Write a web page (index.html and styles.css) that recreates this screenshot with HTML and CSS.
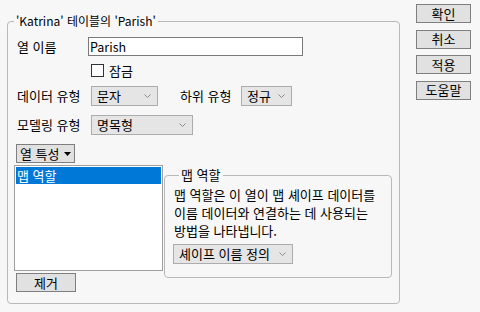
FILE: index.html
```html
<!DOCTYPE html>
<html lang="ko">
<head>
<meta charset="utf-8">
<link rel="stylesheet" href="styles.css">
</head>
<body>
<div class="dialog">
  <fieldset class="group main">
    <legend class="latin">'Katrina' 테이블의 'Parish'</legend>
    <div class="form">
      <div class="row row-name">
        <span class="label label-name">열 이름</span>
        <div class="textbox latin">Parish</div>
      </div>
      <div class="row row-lock">
        <span class="checkbox"></span>
        <span class="check-label">잠금</span>
      </div>
      <div class="row row-type">
        <span class="label label-wide">데이터 유형</span>
        <div class="dropdown dd-data"><span>문자</span><svg class="chev" width="7" height="4" viewBox="0 0 7 4"><polyline points="0.5,0.5 3.5,3.5 6.5,0.5" fill="none" stroke="#8a8a8a" stroke-width="1"/></svg></div>
        <span class="label label-sub">하위 유형</span>
        <div class="dropdown dd-sub"><span>정규</span><svg class="chev" width="7" height="4" viewBox="0 0 7 4"><polyline points="0.5,0.5 3.5,3.5 6.5,0.5" fill="none" stroke="#8a8a8a" stroke-width="1"/></svg></div>
      </div>
      <div class="row row-model">
        <span class="label label-wide">모델링 유형</span>
        <div class="dropdown dd-model"><span>명목형</span><svg class="chev" width="7" height="4" viewBox="0 0 7 4"><polyline points="0.5,0.5 3.5,3.5 6.5,0.5" fill="none" stroke="#8a8a8a" stroke-width="1"/></svg></div>
      </div>
      <div class="btn btn-menu"><span>열 특성</span><svg class="tri" width="7" height="4" viewBox="0 0 7 4"><polygon points="0,0 7,0 3.5,4" fill="#000"/></svg></div>
      <div class="bottom">
        <div class="left-col">
          <div class="listbox">
            <div class="list-item selected">맵 역할</div>
          </div>
          <div class="btn btn-remove">제거</div>
        </div>
        <fieldset class="group inner">
          <legend>맵 역할</legend>
          <p class="desc">맵 역할은 이 열이 맵 셰이프 데이터를<br>이름 데이터와 연결하는 데 사용되는<br>방법을 나타냅니다.</p>
          <div class="dropdown dd-shape"><span>셰이프 이름 정의</span><svg class="chev" width="7" height="4" viewBox="0 0 7 4"><polyline points="0.5,0.5 3.5,3.5 6.5,0.5" fill="none" stroke="#8a8a8a" stroke-width="1"/></svg></div>
        </fieldset>
      </div>
    </div>
  </fieldset>
  <div class="actions">
    <div class="btn btn-action">확인</div>
    <div class="btn btn-action">취소</div>
    <div class="btn btn-action">적용</div>
    <div class="btn btn-action">도움말</div>
  </div>
</div>
</body>
</html>
```
FILE: styles.css
```css
html, body {
  margin: 0;
  padding: 0;
  background: #f7f7f7;
}
body {
  width: 480px;
  height: 312px;
  overflow: hidden;
  font-family: "Noto Sans CJK KR", "Noto Sans", sans-serif;
  font-size: 13px;
  color: #000;
}
.dialog {
  display: flex;
  align-items: flex-start;
  padding: 4px 0 0 7px;
}
.group {
  margin: 0;
  padding: 0;
  border: 1px solid #b9b9b9;
  border-radius: 4px;
  min-width: 0;
  box-sizing: border-box;
}
.group > legend {
  margin-left: 6px;
  padding: 0 2px;
  line-height: 16px;
  height: 16px;
}
.group > legend.latin {
  font-size: 12px;
}
.textbox.latin {
  font-size: 12.5px;
}
.main {
  width: 393px;
  margin-top: 9px;
}
.form {
  display: flex;
  flex-direction: column;
  align-items: flex-start;
  padding: 8px 0 11px 6px;
}
.row {
  display: flex;
  align-items: center;
}
.label {
  white-space: nowrap;
  line-height: 16px;
}
.row-name {
  height: 19px;
  margin-left: 3px;
}
.label-name {
  width: 71px;
}
.textbox {
  box-sizing: border-box;
  width: 215px;
  height: 19px;
  background: #fff;
  border: 1px solid #7a7a7a;
  padding-left: 1px;
  line-height: 17px;
}
.row-lock {
  margin-top: 8px;
  margin-left: 77px;
  height: 13px;
}
.checkbox {
  box-sizing: border-box;
  width: 13px;
  height: 13px;
  background: #fff;
  border: 1px solid #333;
}
.check-label {
  margin-left: 5px;
  line-height: 16px;
}
.row-type, .row-model {
  margin-top: 9px;
  margin-left: 3px;
  height: 20px;
}
.label-wide {
  width: 74px;
}
.label-sub {
  width: 61px;
  margin-left: 22px;
}
.dropdown {
  box-sizing: border-box;
  height: 20px;
  display: flex;
  align-items: center;
  justify-content: space-between;
  padding: 0 6px 0 5px;
  background: #e5e5e5;
  border: 1px solid #acacac;
  line-height: 16px;
  white-space: nowrap;
}
.chev {
  display: block;
  flex: none;
}
.dd-data { width: 67px; }
.dd-sub { width: 51px; }
.dd-model { width: 102px; }
.btn {
  box-sizing: border-box;
  height: 19px;
  background: #e1e1e1;
  border: 1px solid #7f7f7f;
  display: flex;
  align-items: center;
  justify-content: center;
  line-height: 16px;
  white-space: nowrap;
}
.btn-menu {
  margin-top: 9px;
  margin-left: 2px;
  width: 59px;
  justify-content: flex-start;
  padding-left: 3px;
}
.tri {
  display: block;
  margin-left: 4px;
}
.bottom {
  display: flex;
  align-items: flex-start;
  margin-top: 2px;
}
.left-col {
  display: flex;
  flex-direction: column;
  align-items: flex-start;
}
.listbox {
  box-sizing: border-box;
  width: 149px;
  height: 106px;
  background: #fff;
  border: 1px solid #a0a0a0;
  padding: 1px;
}
.list-item {
  height: 17px;
  line-height: 17px;
  padding-left: 1px;
}
.list-item.selected {
  background: #0078d7;
  color: #fff;
}
.btn-remove {
  margin-top: 2px;
  margin-left: 2px;
  width: 60px;
}
.inner {
  width: 228px;
  height: 111px;
  margin-left: 1px;
  margin-top: 2px;
  padding: 0 0 0 8px;
}
.desc {
  margin: 3px 0 0 1px;
  line-height: 18px;
  white-space: nowrap;
}
.dd-shape {
  margin-top: 4px;
  width: 120px;
}
.actions {
  display: flex;
  flex-direction: column;
  gap: 6.5px;
  margin-left: 16px;
}
.btn-action {
  width: 55px;
}
```
